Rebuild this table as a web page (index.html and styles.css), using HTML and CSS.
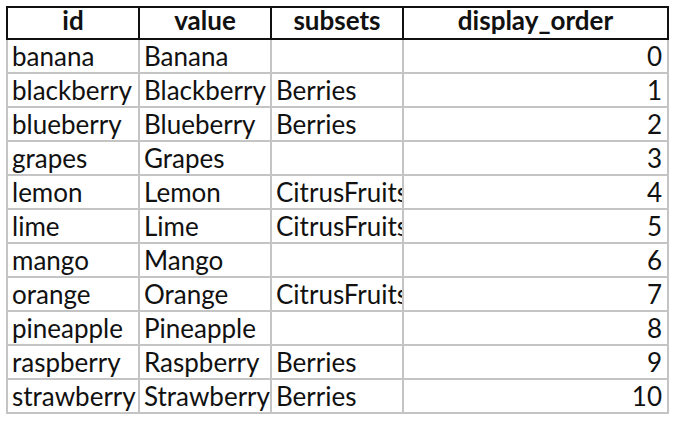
FILE: index.html
```html
<!DOCTYPE html>
<html>
<head>
<meta charset="utf-8">
<link rel="stylesheet" href="styles.css">
</head>
<body>
<table class="sheet">
  <colgroup>
    <col class="c-id"><col class="c-value"><col class="c-subsets"><col class="c-order">
  </colgroup>
  <thead>
    <tr><th>id</th><th>value</th><th>subsets</th><th>display_order</th></tr>
  </thead>
  <tbody>
    <tr><td>banana</td><td>Banana</td><td></td><td class="num">0</td></tr>
    <tr><td>blackberry</td><td>Blackberry</td><td>Berries</td><td class="num">1</td></tr>
    <tr><td>blueberry</td><td>Blueberry</td><td>Berries</td><td class="num">2</td></tr>
    <tr><td>grapes</td><td>Grapes</td><td></td><td class="num">3</td></tr>
    <tr><td>lemon</td><td>Lemon</td><td>CitrusFruits</td><td class="num">4</td></tr>
    <tr><td>lime</td><td>Lime</td><td>CitrusFruits</td><td class="num">5</td></tr>
    <tr><td>mango</td><td>Mango</td><td></td><td class="num">6</td></tr>
    <tr><td>orange</td><td>Orange</td><td>CitrusFruits</td><td class="num">7</td></tr>
    <tr><td>pineapple</td><td>Pineapple</td><td></td><td class="num">8</td></tr>
    <tr><td>raspberry</td><td>Raspberry</td><td>Berries</td><td class="num">9</td></tr>
    <tr><td>strawberry</td><td>Strawberry</td><td>Berries</td><td class="num">10</td></tr>
  </tbody>
</table>
</body>
</html>
```
FILE: styles.css
```css
html, body {
  margin: 0;
  background: #ffffff;
}
body {
  padding: 6px 0 0 6px;
  font-family: Lato, "Open Sans", sans-serif;
  color: #111111;
}
.sheet {
  border-collapse: collapse;
  table-layout: fixed;
  width: 661px;
}
.c-id, .c-value, .c-subsets { width: 132px; }
.c-order { width: 265px; }
.sheet th, .sheet td {
  white-space: nowrap;
  font-size: 26px;
}
.sheet th {
  height: 29px;
  line-height: 22px;
  padding: 1px 4px 0;
  vertical-align: top;
  border: 2px solid #111111;
  font-weight: 700;
  text-align: center;
}
.sheet td {
  overflow: hidden;
  height: 30px;
  line-height: 28px;
  padding: 0 2px 2px 4px;
  vertical-align: bottom;
  border: 2px solid #c4c4c4;
  text-align: left;
}
.sheet td.num {
  text-align: right;
  padding-right: 5px;
}
```
